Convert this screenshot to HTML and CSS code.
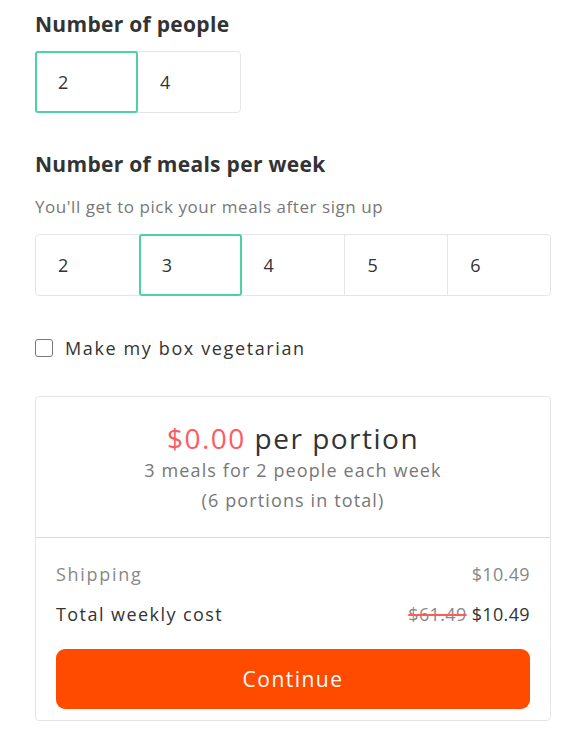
FILE: index.html
```html
<!DOCTYPE html>
<html>
<head>
<meta charset="utf-8">
<link rel="stylesheet" href="styles.css">
</head>
<body>
<div class="page">
  <h2 class="title">Number of people</h2>
  <div class="options options-2">
    <div class="opt selected">2</div>
    <div class="opt">4</div>
  </div>

  <h2 class="title title-meals">Number of meals per week</h2>
  <p class="sub">You'll get to pick your meals after sign up</p>
  <div class="options options-5">
    <div class="opt">2</div>
    <div class="opt selected">3</div>
    <div class="opt">4</div>
    <div class="opt">5</div>
    <div class="opt">6</div>
  </div>

  <label class="check">
    <span class="box"></span>
    <span class="check-label">Make my box vegetarian</span>
  </label>

  <div class="card">
    <div class="card-top">
      <div class="price"><span class="red">$0.00</span> per portion</div>
      <div class="desc">3 meals for 2 people each week</div>
      <div class="desc">(6 portions in total)</div>
    </div>
    <div class="card-bottom">
      <div class="row muted"><span class="lbl lbl-ship">Shipping</span><span class="amt">$10.49</span></div>
      <div class="row"><span class="lbl">Total weekly cost</span><span class="amt"><s class="old">$61.49</s> $10.49</span></div>
      <button class="btn">Continue</button>
    </div>
  </div>
</div>
</body>
</html>
```

FILE: styles.css
```css
* { box-sizing: border-box; }
body {
  margin: 0;
  background: #fff;
  font-family: "Open Sans", "Noto Sans", sans-serif;
  color: #333;
  letter-spacing: 0.07em;
}
.page {
  width: 550px;
  padding: 11px 0 0 35px;
}
.title {
  margin: 0;
  font-size: 21px;
  line-height: 26px;
  font-weight: 700;
  letter-spacing: 0.3px;
  color: #333;
}
.options {
  display: flex;
  margin-top: 14px;
  border: 1px solid #e6e6e6;
  border-radius: 4px;
}
.options-2 { width: 206px; }
.options-5 { width: 516px; margin-top: 17px; }
.opt {
  width: 103px;
  height: 60px;
  display: flex;
  align-items: center;
  padding-left: 22px;
  font-size: 18px;
  letter-spacing: 0;
  color: #333;
  border-left: 1px solid #e6e6e6;
}
.opt:first-child { border-left: none; }
.opt.selected {
  border: 2px solid #4fd1a5;
  margin: -1px 0;
  height: 62px;
  padding-left: 21px;
  border-radius: 3px;
}
.options-2 .opt.selected { margin-left: -1px; width: 104px; }
.options-2 .opt:first-child + .opt { border-left: none; }
.options-5 .opt.selected + .opt { border-left: none; }
.title-meals { margin-top: 38px; }
.sub {
  margin: 20px 0 0;
  font-size: 17px;
  line-height: 20px;
  letter-spacing: 0.55px;
  color: #777;
}
.check {
  display: flex;
  align-items: center;
  margin-top: 40px;
}
.box {
  width: 18px;
  height: 18px;
  border: 1.5px solid #777;
  border-radius: 3px;
}
.check-label {
  margin-left: 12px;
  font-size: 18px;
  letter-spacing: 0.09em;
  color: #333;
}
.card {
  margin-top: 36px;
  width: 516px;
  border: 1px solid #e6e6e6;
  border-radius: 4px;
}
.card-top {
  text-align: center;
  padding: 24px 0 22px;
  border-bottom: 1px solid #d9d9d9;
}
.price {
  font-size: 28px;
  line-height: 34px;
  letter-spacing: 1.5px;
  color: #333;
  font-weight: 500;
}
.red { color: #ff5a5f; }
.desc {
  font-size: 18px;
  line-height: 30px;
  color: #777;
}
.card-bottom {
  padding: 24px 20px 11px;
}
.row {
  display: flex;
  justify-content: space-between;
  font-size: 18px;
  line-height: 24px;
  color: #333;
  margin-bottom: 16px;
}
.lbl { letter-spacing: 0.08em; }
.lbl-ship { letter-spacing: 0.095em; }
.amt { letter-spacing: 0.02em; }
.row.muted { color: #888; }
.old {
  color: #888;
  text-decoration-color: #ff5a5f;
  text-decoration-thickness: 2px;
}
.btn {
  display: block;
  width: 100%;
  height: 60px;
  margin-top: 23px;
  border: none;
  border-radius: 9px;
  background: #ff4b00;
  color: #fff;
  font-family: inherit;
  letter-spacing: 0.07em;
  font-size: 21px;
}
```
